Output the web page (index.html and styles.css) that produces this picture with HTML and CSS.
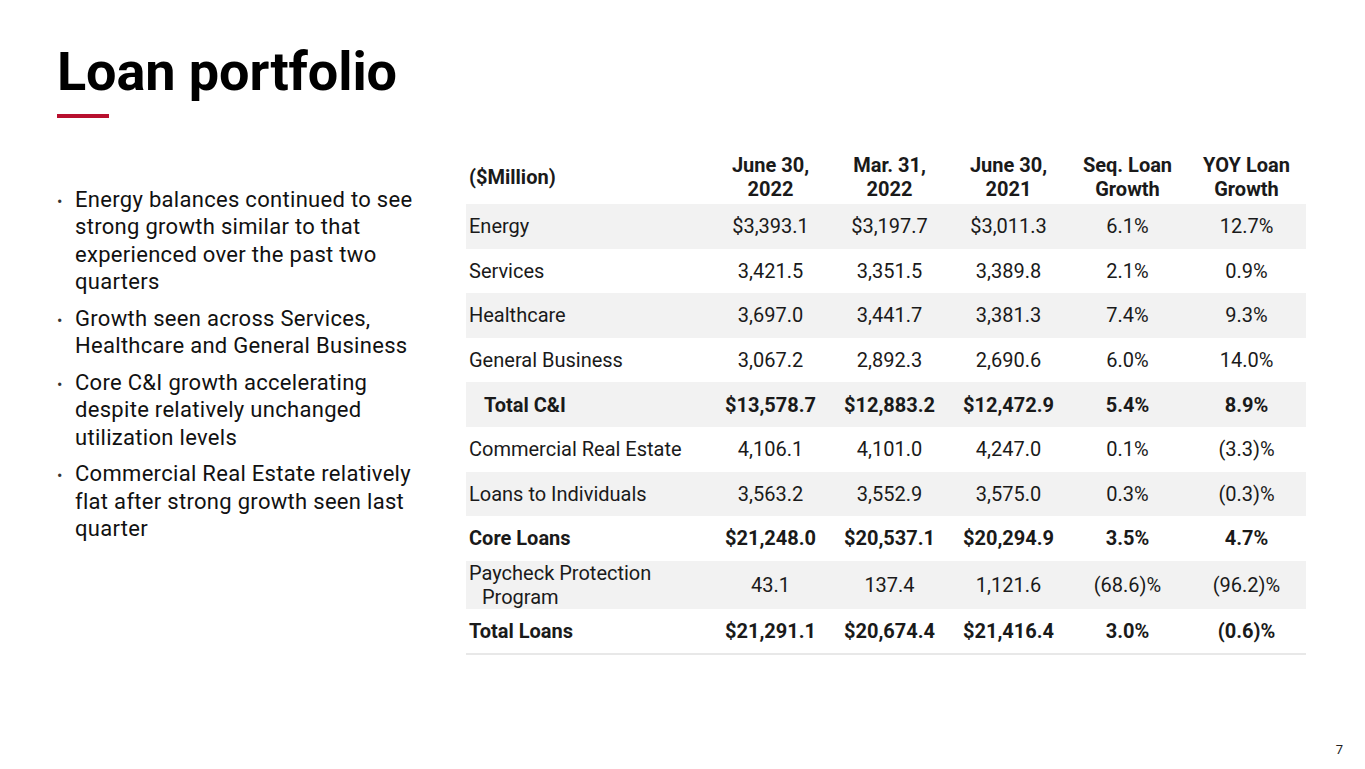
FILE: index.html
```html
<!DOCTYPE html>
<html>
<head>
<meta charset="utf-8">
<link rel="stylesheet" href="styles.css">
</head>
<body>
<div class="slide">
  <header class="head">
    <h1 class="title">Loan portfolio</h1>
    <div class="rule"></div>
  </header>
  <div class="content">
    <ul class="bullets">
      <li>Energy balances continued to see strong growth similar to that experienced over the past two quarters</li>
      <li>Growth seen across Services, Healthcare and General Business</li>
      <li>Core C&amp;I growth accelerating despite relatively unchanged utilization levels</li>
      <li>Commercial Real Estate relatively flat after strong growth seen last quarter</li>
    </ul>
    <table class="loans">
      <colgroup>
        <col class="c-label"><col class="c-num"><col class="c-num"><col class="c-num"><col class="c-num"><col class="c-num">
      </colgroup>
      <thead>
        <tr>
          <th class="lbl">($Million)</th>
          <th>June 30,<br>2022</th>
          <th>Mar. 31,<br>2022</th>
          <th>June 30,<br>2021</th>
          <th>Seq. Loan<br>Growth</th>
          <th>YOY Loan<br>Growth</th>
        </tr>
      </thead>
      <tbody>
        <tr class="shade"><td class="lbl">Energy</td><td>$3,393.1</td><td>$3,197.7</td><td>$3,011.3</td><td>6.1%</td><td>12.7%</td></tr>
        <tr><td class="lbl">Services</td><td>3,421.5</td><td>3,351.5</td><td>3,389.8</td><td>2.1%</td><td>0.9%</td></tr>
        <tr class="shade"><td class="lbl">Healthcare</td><td>3,697.0</td><td>3,441.7</td><td>3,381.3</td><td>7.4%</td><td>9.3%</td></tr>
        <tr><td class="lbl">General Business</td><td>3,067.2</td><td>2,892.3</td><td>2,690.6</td><td>6.0%</td><td>14.0%</td></tr>
        <tr class="shade bold"><td class="lbl sub">Total C&amp;I</td><td>$13,578.7</td><td>$12,883.2</td><td>$12,472.9</td><td>5.4%</td><td>8.9%</td></tr>
        <tr><td class="lbl">Commercial Real Estate</td><td>4,106.1</td><td>4,101.0</td><td>4,247.0</td><td>0.1%</td><td>(3.3)%</td></tr>
        <tr class="shade"><td class="lbl">Loans to Individuals</td><td>3,563.2</td><td>3,552.9</td><td>3,575.0</td><td>0.3%</td><td>(0.3)%</td></tr>
        <tr class="bold"><td class="lbl">Core Loans</td><td>$21,248.0</td><td>$20,537.1</td><td>$20,294.9</td><td>3.5%</td><td>4.7%</td></tr>
        <tr class="shade tall"><td class="lbl hang">Paycheck Protection Program</td><td>43.1</td><td>137.4</td><td>1,121.6</td><td>(68.6)%</td><td>(96.2)%</td></tr>
        <tr class="bold last"><td class="lbl">Total Loans</td><td>$21,291.1</td><td>$20,674.4</td><td>$21,416.4</td><td>3.0%</td><td>(0.6)%</td></tr>
      </tbody>
    </table>
  </div>
  <div class="pagenum">7</div>
</div>
</body>
</html>
```
FILE: styles.css
```css
html, body {
  margin: 0;
  padding: 0;
  background: #ffffff;
}
.slide {
  position: relative;
  width: 1365px;
  height: 769px;
  overflow: hidden;
  font-family: Roboto, "Liberation Sans", sans-serif;
  color: #111111;
}
.head {
  padding: 40px 0 0 57px;
}
.title {
  margin: 0;
  font-size: 54px;
  line-height: 64px;
  font-weight: 700;
  color: #000000;
  letter-spacing: -0.1px;
}
.rule {
  width: 52px;
  height: 4px;
  background: #b8102e;
  margin-top: 10px;
}
.content {
  display: flex;
  align-items: flex-start;
  margin-top: 32px;
  padding-left: 57px;
}
.bullets {
  list-style: none;
  margin: 0;
  padding: 0;
  padding-top: 36px;
  width: 366px;
  font-size: 22px;
  line-height: 27.3px;
  letter-spacing: 0.3px;
  color: #111111;
}
.bullets li {
  position: relative;
  padding-left: 18px;
  margin-bottom: 9.6px;
}
.bullets li::before {
  content: "\2022";
  position: absolute;
  left: 0;
  top: 2px;
  font-size: 16px;
  color: #333333;
}
.loans {
  margin-left: 43px;
  border-collapse: collapse;
  table-layout: fixed;
  width: 840px;
  font-size: 20px;
  color: #1a1a1a;
}
.c-label { width: 245px; }
.c-num { width: 119px; }
.loans th {
  font-weight: 700;
  line-height: 24px;
  height: 54px;
  padding: 0;
  text-align: center;
  vertical-align: middle;
  color: #1a1a1a;
}
.loans td {
  height: 44.6px;
  padding: 0;
  line-height: 24px;
  text-align: center;
  vertical-align: middle;
}
.loans .lbl {
  text-align: left;
  padding-left: 3px;
}
.loans .sub {
  padding-left: 18px;
}
.loans .hang {
  padding-left: 16px;
  text-indent: -13px;
}
.loans tr.tall td {
  height: 47px;
}
.shade td {
  background: #f2f2f2;
}
.bold td {
  font-weight: 700;
}
.last td {
  border-bottom: 2px solid #e8e8e8;
}
.pagenum {
  position: absolute;
  right: 22px;
  bottom: 12px;
  font-size: 13px;
  color: #222222;
}
```
